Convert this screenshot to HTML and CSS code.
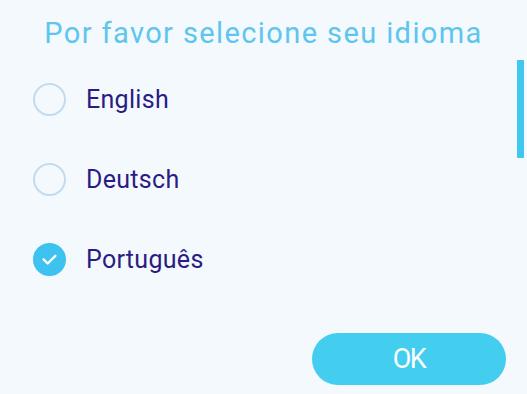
FILE: index.html
```html
<!DOCTYPE html>
<html>
<head>
<meta charset="utf-8">
<link rel="stylesheet" href="styles.css">
</head>
<body>
<div class="dialog">
  <h1 class="title">Por favor selecione seu idioma</h1>
  <ul class="options">
    <li class="option"><span class="radio"></span><span class="label">English</span></li>
    <li class="option"><span class="radio"></span><span class="label">Deutsch</span></li>
    <li class="option selected"><span class="radio checked"><svg viewBox="0 0 32 32" width="32" height="32"><path d="M9.5 16.5 L14 21 L22.5 12.5" fill="none" stroke="#fff" stroke-width="2.6" stroke-linecap="round" stroke-linejoin="round"/></svg></span><span class="label">Português</span></li>
  </ul>
  <div class="actions"><button class="ok">OK</button></div>
  <div class="scrollbar"></div>
</div>
</body>
</html>
```
FILE: styles.css
```css
html, body {
  margin: 0;
  padding: 0;
}
body {
  width: 527px;
  height: 394px;
  overflow: hidden;
  background: #f4f9fd;
  font-family: Roboto, "Liberation Sans", sans-serif;
}
.dialog {
  position: relative;
  width: 527px;
  height: 394px;
  box-sizing: border-box;
  padding: 14px 0 9px;
  display: flex;
  flex-direction: column;
}
.title {
  margin: 0;
  text-align: center;
  font-weight: 400;
  font-size: 29px;
  line-height: 38px;
  color: #5ec6ee;
  letter-spacing: 1.4px;
}
.options {
  list-style: none;
  margin: 0;
  padding: 0 0 0 33px;
  margin-top: 7px;
}
.option {
  display: flex;
  align-items: center;
  height: 80px;
}
.radio {
  width: 29px;
  height: 29px;
  border: 2px solid #c3dbf0;
  border-radius: 50%;
  flex: none;
  display: flex;
  align-items: center;
  justify-content: center;
}
.radio.checked {
  background: #3ec2ef;
  border-color: #3ec2ef;
}
.radio svg {
  width: 30px;
  height: 30px;
}
.label {
  margin-left: 20px;
  font-size: 25px;
  color: #2a1c84;
  letter-spacing: 0.3px;
}
.actions {
  display: flex;
  justify-content: flex-end;
  padding-right: 21px;
  margin-top: auto;
}
.ok {
  width: 194px;
  height: 52px;
  border: none;
  border-radius: 26px;
  background: #43cef0;
  color: #fff;
  font-family: Roboto, "Liberation Sans", sans-serif;
  font-size: 27px;
  letter-spacing: -1.5px;
  padding: 0;
}
.scrollbar {
  position: absolute;
  right: 3px;
  top: 60px;
  width: 7px;
  height: 98px;
  background: #3fc7ee;
  border-radius: 1px;
}
```
